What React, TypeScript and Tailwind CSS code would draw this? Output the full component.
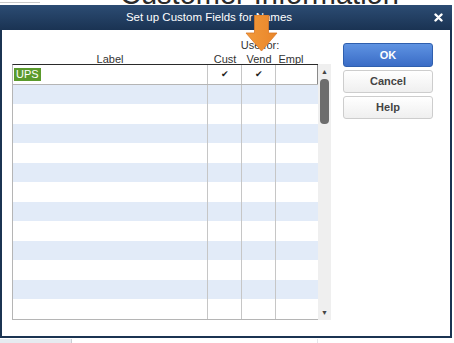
import React from 'react';

const rows = Array.from({ length: 13 }, (_, i) => i);

const Check = () => <span className="text-[9px] leading-none text-[#222]">✔</span>;

export default function App() {
  return (
    <div className="w-[454px] h-[343px] bg-white overflow-hidden flex flex-col font-['Liberation_Sans',Arial,sans-serif]">
      {/* page behind the dialog */}
      <div className="relative h-[5px] overflow-hidden shrink-0">
        <div className="absolute top-[2px] left-0 w-[40px] h-px bg-[#c9c9c9]" />
        <span className="absolute top-[-20px] left-[120px] text-[29px] leading-none text-[#2a2a2a] whitespace-nowrap">
          Customer Information
        </span>
      </div>

      <div className="relative w-[452px] h-[333px] shrink-0 flex flex-col border-x-2 border-b-2 border-[#1b3452]">
        {/* title bar */}
        <div className="h-[25px] shrink-0 flex items-center bg-gradient-to-b from-[#2c4c73] to-[#1a3353] -mx-[2px] px-[2px]">
          <div className="flex-1 text-center pr-[18px] text-white text-[11.5px]">Set up Custom Fields for Names</div>
          <svg width="9" height="9" viewBox="0 0 9 9" className="mr-[7px]">
            <path d="M1.5 1.5 L7.5 7.5 M7.5 1.5 L1.5 7.5" stroke="#fff" strokeWidth="2.4" strokeLinecap="round" />
          </svg>
        </div>

        {/* body */}
        <div className="flex-1 flex pl-[10px]">
          <div className="flex flex-col">
            <div className="h-[34px] relative text-[11px] text-[#333]">
              <div className="absolute top-[7px] left-[220px] w-[56px] text-center whitespace-nowrap">Use for:</div>
              <div className="absolute top-[21px] left-0 flex">
                <div className="w-[196px] text-center">Label</div>
                <div className="w-[34px] text-center">Cust</div>
                <div className="w-[34px] text-center">Vend</div>
                <div className="w-[30px] text-center">Empl</div>
              </div>
            </div>
            <div className="flex">
              <div className="w-[306px] border-t border-t-[#2a2a2a] border-l border-b border-[#b5b5b5]">
                {rows.map((i) => (
                  <div
                    key={i}
                    className={`flex ${i % 2 === 0 ? 'h-5 bg-white' : 'h-[19px] bg-[#e2ebf8]'} ${i === 0 ? 'border-b border-[#b5b5b5]' : ''}`}
                  >
                    <div className="w-[195px] border-r border-[#c6c6c6] flex items-center pl-[1px]">
                      {i === 0 && (
                        <span className="bg-[#5a9a2c] text-white text-[11px] leading-[13px] px-[2px]">UPS</span>
                      )}
                    </div>
                    <div className="w-[34px] border-r border-[#c6c6c6] flex items-center justify-center">
                      {i === 0 && <Check />}
                    </div>
                    <div className="w-[34px] border-r border-[#c6c6c6] flex items-center justify-center">
                      {i === 0 && <Check />}
                    </div>
                    <div className={`flex-1 ${i === 0 ? 'border-r border-[#8a8a8a]' : ''}`} />
                  </div>
                ))}
              </div>
              {/* scrollbar */}
              <div className="w-[13px] bg-[#efefef] flex flex-col items-center pt-[3px] pb-[3px]">
                <span className="text-[7px] leading-[9px] text-[#444]">▲</span>
                <div className="mt-[3px] w-[9px] h-[45px] rounded-[4px] bg-[#6d6d6d]" />
                <div className="flex-1" />
                <span className="text-[7px] leading-[9px] text-[#444]">▼</span>
              </div>
            </div>
          </div>

          {/* buttons */}
          <div className="ml-[12px] pt-[13px] flex flex-col gap-[3px] text-[11px] font-bold">
            <button className="w-[90px] h-[24px] rounded-[3px] border border-[#2f5fae] bg-gradient-to-b from-[#5f93e2] to-[#3a6cc6] text-white">
              OK
            </button>
            <button className="w-[90px] h-[23px] rounded-[3px] border border-[#cdcdcd] bg-gradient-to-b from-white to-[#efefef] text-[#444]">
              Cancel
            </button>
            <button className="w-[90px] h-[23px] rounded-[3px] border border-[#cdcdcd] bg-gradient-to-b from-white to-[#efefef] text-[#444]">
              Help
            </button>
          </div>
        </div>

        {/* annotation arrow */}
        <svg className="absolute left-[243px] top-[10px]" width="33" height="37" viewBox="0 0 33 37">
          <defs>
            <linearGradient id="arr" x1="0" y1="0" x2="1" y2="0">
              <stop offset="0" stopColor="#f29a3a" />
              <stop offset="1" stopColor="#e9852a" />
            </linearGradient>
          </defs>
          <polygon points="9.5,0 23.5,0 23.5,18 32,18 16.5,36 1,18 9.5,18" fill="url(#arr)" stroke="#d8782a" strokeWidth="0.8" />
        </svg>
      </div>

      {/* strip below */}
      <div className="flex-1 flex mt-px">
        <div className="w-[72px] bg-[#e6ebf0] border-r border-[#c9ced4]" />
        <div className="w-[246px] border-r border-[#e3e6ea]" />
        <div className="flex-1" />
      </div>
    </div>
  );
}
